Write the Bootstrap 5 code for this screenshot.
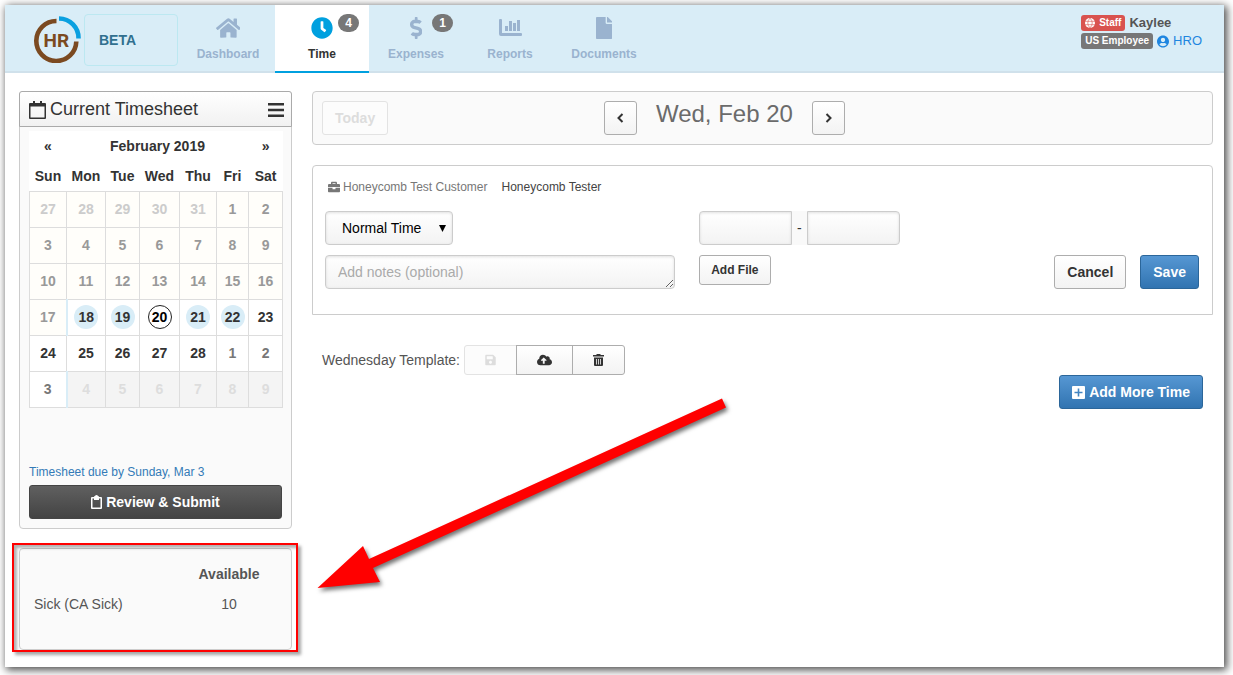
<!DOCTYPE html>
<html lang="en">
<head>
<meta charset="utf-8">
<meta name="viewport" content="width=device-width, initial-scale=1">
<title>HR – Time</title>
<link href="https://cdn.jsdelivr.net/npm/bootstrap@5.3.0/dist/css/bootstrap.min.css" rel="stylesheet">
<style>
  body { background: #fff; color: #555; font-family: "Liberation Sans", Arial, sans-serif; font-size: 14px; line-height: 20px; }
  svg { fill: currentColor; flex: none; }
  .app-frame { margin: 5px 9px 9px 5px; min-height: calc(100vh - 14px); background: #fff; box-shadow: 2px 2px 8px 1px rgba(0,0,0,.7); }

  /* top bar */
  .topbar { background: #d9edf7; border-bottom: 2px solid #d0e1eb; padding-left: 28px; padding-right: 22px; height: 68px; }
  .brand-logo { width: 48px; height: 48px; margin-top: 10px; }
  .beta-box { width: 94px; height: 52px; margin: 9px 3px 0; padding: 15px 14px; border: 1px solid #bce8f1; border-radius: 4px; color: #31708f; font-weight: bold; }
  .tab-link { width: 94px; height: 68px; padding-top: 12px; color: #9ab3cf; font-size: 12px; line-height: 16px; font-weight: bold; text-align: center; text-decoration: none; position: relative; }
  .tab-link svg { display: block; height: 22px; margin: 0 auto 7px; }
  .tab-link.active { background: #fff; color: #333; border-bottom: 2px solid #00a0df; }
  .tab-link.active svg { color: #00a0df; }
  .count-badge { position: absolute; top: 9px; right: 10px; min-width: 21px; padding: 3px 6px; border-radius: 9px; background: #777; color: #fff; font-size: 12px; line-height: 12px; }
  .user-box { padding-top: 9px; font-size: 13px; line-height: 18px; }
  .tag { padding: 3px 4px; border-radius: 3px; font-size: 10px; line-height: 10px; color: #fff; font-weight: bold; }
  .tag-red { background: #d9534f; }
  .tag-grey { background: #777; }
  .user-box a { color: #1f86e0; text-decoration: none; }

  /* columns */
  .columns { padding: 18px 11px 17px 14px; gap: 20px; }
  .side { width: 273px; }
  .panel { background: #fafafa; border: 1px solid #ccc; border-radius: 4px; }
  .side-head { margin: -1px -1px 0; height: 36px; padding: 1px 7px 0 9px; border: 1px solid #aaa; border-radius: 3px 3px 0 0; background: linear-gradient(#fff, #f1f1f1); color: #333; font-size: 18px; }
  .side-head h1 { font-size: 18px; font-weight: normal; }
  .plain-btn { border: 0; background: none; padding: 0; color: inherit; display: block; }
  .side-body { padding: 4px 9px 9px; }

  .cal { width: 100%; table-layout: fixed; background: #fff; border-collapse: collapse; color: #333; font-weight: bold; text-align: center; }
  .cal th { height: 30px; padding: 0; }
  .cal td { height: 36px; padding: 0; border: 1px solid #ddd; }
  .cal .c-sun, .cal .c-thu { width: 37px; }
  .cal .c-mon { width: 39px; }
  .cal .c-tue, .cal .c-sat { width: 34px; }
  .cal .c-wed { width: 40px; }
  .cal .c-fri { width: 32px; }
  .cal .past { background: #fffefa; color: #999; }
  .cal .prev { background: #fffefa; color: #ccc; }
  .cal .next { color: #777; }
  .cal .off { background: #f4f4f4; color: #ddd; }
  .cal .edge { border-right: 2px solid #d9edf7; }
  .dot { display: block; width: 24px; height: 24px; margin: 0 auto; border-radius: 50%; background: #d9edf7; line-height: 24px; }
  .dot-now { background: none; border: 1px solid #222; color: #000; line-height: 23px; }
  .due { margin-top: 54px; margin-bottom: 3px; font-size: 12px; color: #337ab7; text-decoration: none; display: block; }

  /* buttons */
  .hbtn { height: 34px; padding: 0 12px; border: 1px solid #adadad; border-radius: 3px; background: linear-gradient(#fff, #f3f3f3); color: #333; font-size: 14px; line-height: 20px; font-weight: bold; display: inline-flex; align-items: center; justify-content: center; }
  .hbtn:disabled { opacity: 1; border-color: #e3e3e3; color: #ddd; background: #fcfcfc; }
  .hbtn-dark { border-color: #444; background: linear-gradient(#606060, #434343); color: #fff; gap: 4px; }
  .hbtn-blue { border-color: #2b669a; background: linear-gradient(#5697d3, #3174b1); color: #fff; gap: 4px; }
  .hbtn-low { height: 30px; padding: 0 11px; font-size: 12px; }
  .hbtn-arrow { width: 33px; padding: 0; }

  .avail { position: relative; margin-top: 19px; height: 102px; padding: 10px 12px 10px 14px; }
  .avail table { width: 100%; }
  .avail th, .avail td { height: 30px; padding: 0; }
  .avail .num { width: 100px; text-align: center; }
  .callout-box { position: absolute; inset: -6px -7px -3px -8px; border: 2px solid #f00; box-shadow: 3px 3px 3px rgba(0,0,0,.35), inset 3px 3px 3px rgba(0,0,0,.3); pointer-events: none; }

  /* entry area */
  .main-col { position: relative; min-width: 0; }
  .date-bar { padding: 9px 12px 9px 9px; height: 54px; }
  .date-title { font-size: 24px; line-height: 26px; font-weight: normal; color: #6b6b6b; margin: 0 19px; }
  .entry { margin-top: 20px; padding: 12px 13px 25px 12px; border: 1px solid #ccc; border-radius: 4px 4px 0 0; --bs-gutter-x: 24px; }
  .who { font-size: 12px; line-height: 18px; padding-left: 3px; margin-bottom: 15px; color: #777; }
  .who svg { margin-right: 3px; }
  .who b { font-weight: normal; color: #444; margin-left: 14px; }
  .field { height: 34px; border: 1px solid #ccc; border-radius: 4px; background-color: transparent; background-image: linear-gradient(#fff, #f3f3f3); box-shadow: inset 0 1px 3px rgba(0,0,0,.12); font-size: 14px; line-height: 20px; padding: 6px 12px; color: #000; }
  .field::placeholder { color: #aaa; }
  .kind { width: 128px; padding-left: 16px; padding-right: 20px; background-repeat: no-repeat; background-position: right 6px center, 0 0; background-size: 7px 7px, auto; background-image: url("data:image/svg+xml,%3Csvg xmlns='http://www.w3.org/2000/svg' viewBox='0 0 7 7'%3E%3Cpath d='M0 0h7L3.500 7z'/%3E%3C/svg%3E"), linear-gradient(#fff, #f3f3f3); }
  textarea.field { min-height: 34px; display: block; }
  .dash { width: 17px; background: #f9f9f9; color: #333; padding: 0; border: 0; justify-content: center; font-size: 14px; }
  .second { margin-top: 10px; }
  .actions { gap: 14px; }
  .template-row { padding: 30px 10px 0; }
  .template-row .btn-group .hbtn { padding: 0; width: 53px; }
  .template-row .btn-group .hbtn-mid { width: 57px; }
  .arrow { position: absolute; left: 0; top: 300px; filter: drop-shadow(2px 3px 2px rgba(0,0,0,.55)); pointer-events: none; }
</style>
</head>
<body>
<div class="app-frame">
  <header class="topbar d-flex align-items-start">
    <svg class="brand-logo" viewBox="33 15 48 48" role="img" aria-label="HR">
      <path d="M56.500 21A20 20 0 1 0 76.300 41.500" fill="none" stroke="#7b4a21" stroke-width="4.600"/>
      <path d="M59 18.500A19.500 19.500 0 0 1 78.500 38.500" fill="none" stroke="#0aa0e0" stroke-width="4.600"/>
      <text x="43.500" y="47" font-family="Roboto" font-weight="700" font-size="19" fill="#7b4a21">HR</text>
    </svg>
    <div class="beta-box">BETA</div>
    <nav class="d-flex">
      <a class="tab-link" href="#"><svg viewBox="0 0 576 512"><path d="M280.370 148.260L96 300.110V464a16 16 0 0 0 16 16l112.060-.290a16 16 0 0 0 15.920-16V368a16 16 0 0 1 16-16h64a16 16 0 0 1 16 16v95.640a16 16 0 0 0 16 16.050L464 480a16 16 0 0 0 16-16V300L295.670 148.260a12.190 12.190 0 0 0-15.300 0zM571.600 251.470L488 182.560V44.050a12 12 0 0 0-12-12h-56a12 12 0 0 0-12 12v72.610L318.470 43a48 48 0 0 0-61 0L4.340 251.470a12 12 0 0 0-1.600 16.900l25.500 31A12 12 0 0 0 45.150 301l235.220-193.740a12.190 12.190 0 0 1 15.300 0L530.900 301a12 12 0 0 0 16.900-1.600l25.500-31a12 12 0 0 0-1.700-16.930z"/></svg>Dashboard</a>
      <a class="tab-link active" aria-current="page" href="#"><svg viewBox="0 0 512 512"><path fill-rule="evenodd" d="M256 8C119 8 8 119 8 256s111 248 248 248 248-111 248-248S393 8 256 8zm92 313l-20 25a16 16 0 0 1-22 3l-67-50a40 40 0 0 1-15-31V112a16 16 0 0 1 16-16h32a16 16 0 0 1 16 16v144l58 42a16 16 0 0 1 2 23z"/></svg>Time<span class="count-badge">4</span></a>
      <a class="tab-link" href="#"><svg viewBox="0 0 288 512"><path d="M209.200 233.400l-108-31.600C88.700 198.200 80 186.500 80 173.500c0-16.300 13.200-29.500 29.500-29.500h66.300c12.200 0 24.200 3.700 34.200 10.500 6.100 4.100 14.300 3.100 19.500-2l34.800-34c7.100-6.900 6.100-18.400-1.800-24.500C238 74.800 207.400 64.100 176 64V16c0-8.800-7.200-16-16-16h-32c-8.800 0-16 7.200-16 16v48h-2.500C45.800 64-5.400 118.700.5 183.600c4.200 46.100 39.400 83.600 83.800 96.600l102.500 30c12.500 3.700 21.200 15.300 21.200 28.300 0 16.300-13.200 29.500-29.500 29.500h-66.300C100 368 88 364.300 78 357.500c-6.100-4.100-14.300-3.100-19.500 2l-34.800 34c-7.100 6.900-6.100 18.400 1.800 24.500 24.500 19.200 55.100 29.900 86.500 30v48c0 8.800 7.200 16 16 16h32c8.800 0 16-7.200 16-16v-48.200c46.600-.9 90.300-28.600 105.700-72.700 21.500-61.600-14.600-124.800-72.500-141.700z"/></svg>Expenses<span class="count-badge">1</span></a>
      <a class="tab-link" href="#"><svg viewBox="0 0 23 22"><path d="M0 3q0-1 1-1h1q1 0 1 1v13h19q1 0 1 1v1q0 1-1 1H2q-2 0-2-2zM6 9h3v5H6zM10 4h3v10h-3zM14 6h3v8h-3zM18 3h3v11h-3z"/></svg>Reports</a>
      <a class="tab-link" href="#"><svg viewBox="0 0 384 512"><path d="M224 136V0H24C10.700 0 0 10.700 0 24v464c0 13.300 10.700 24 24 24h336c13.300 0 24-10.700 24-24V160H248c-13.200 0-24-10.800-24-24zm160-14v6H256V0h6c6.400 0 12.500 2.500 17 7l98 98c4.500 4.500 7 10.600 7 17z"/></svg>Documents</a>
    </nav>
    <div class="user-box ms-auto">
      <div class="d-flex align-items-center gap-1"><span class="tag tag-red d-flex gap-1"><svg width="10" height="10" viewBox="0 0 10 10"><circle cx="5" cy="5" r="5"/><path d="M0 3.300h10M0 6.700h10M5 0Q0.500 5 5 10M5 0Q9.500 5 5 10" fill="none" stroke="#d9534f" stroke-width=".6"/></svg>Staff</span><strong>Kaylee</strong></div>
      <div class="d-flex align-items-center gap-1"><span class="tag tag-grey">US Employee</span><a href="#" class="d-flex align-items-center gap-1"><svg width="12" height="13" viewBox="0 0 496 512"><path d="M248 8C111 8 0 119 0 256s111 248 248 248 248-111 248-248S385 8 248 8zm0 96c48.600 0 88 39.400 88 88s-39.400 88-88 88-88-39.400-88-88 39.400-88 88-88zm0 344c-58.700 0-111.300-26.600-146.500-68.200 18.800-35.400 55.600-59.800 98.500-59.800 2.400 0 4.800.4 7.100 1.100 13 4.200 26.600 6.900 40.900 6.900 14.300 0 28-2.700 40.900-6.900 2.300-.7 4.700-1.100 7.100-1.100 42.900 0 79.700 24.400 98.500 59.800C359.300 421.400 306.700 448 248 448z"/></svg>HRO</a></div>
    </div>
  </header>

  <div class="columns d-flex align-items-start">
    <aside class="side flex-shrink-0">
      <section class="panel">
        <div class="side-head d-flex align-items-center justify-content-between">
          <div class="d-flex align-items-center gap-1">
            <svg width="17" height="18" viewBox="0 0 17 18"><path fill-rule="evenodd" d="M1 2h3V0h2v2h5V0h2v2h3q1 0 1 1v14q0 1-1 1H1q-1 0-1-1V3q0-1 1-1zM1.500 5.500v11h14v-11z"/></svg>
            <h1 class="m-0">Current Timesheet</h1>
          </div>
          <button class="plain-btn" type="button" aria-label="Menu"><svg class="d-block" width="16" height="14" viewBox="0 0 16 14"><path d="M0 0h16v2.500H0zM0 5.700h16v2.500H0zM0 11.500h16V14H0z"/></svg></button>
        </div>
        <div class="side-body">
          <table class="cal">
            <colgroup><col class="c-sun"><col class="c-mon"><col class="c-tue"><col class="c-wed"><col class="c-thu"><col class="c-fri"><col class="c-sat"></colgroup>
            <thead>
              <tr><th>«</th><th colspan="5">February 2019</th><th>»</th></tr>
              <tr><th>Sun</th><th>Mon</th><th>Tue</th><th>Wed</th><th>Thu</th><th>Fri</th><th>Sat</th></tr>
            </thead>
            <tbody>
              <tr><td class="prev">27</td><td class="prev">28</td><td class="prev">29</td><td class="prev">30</td><td class="prev">31</td><td class="past">1</td><td class="past">2</td></tr>
              <tr><td class="past">3</td><td class="past">4</td><td class="past">5</td><td class="past">6</td><td class="past">7</td><td class="past">8</td><td class="past">9</td></tr>
              <tr><td class="past">10</td><td class="past">11</td><td class="past">12</td><td class="past">13</td><td class="past">14</td><td class="past">15</td><td class="past">16</td></tr>
              <tr><td class="past edge">17</td><td><span class="dot">18</span></td><td><span class="dot">19</span></td><td><span class="dot dot-now">20</span></td><td><span class="dot">21</span></td><td><span class="dot">22</span></td><td>23</td></tr>
              <tr><td>24</td><td>25</td><td>26</td><td>27</td><td>28</td><td class="next">1</td><td class="next">2</td></tr>
              <tr><td class="next edge">3</td><td class="off">4</td><td class="off">5</td><td class="off">6</td><td class="off">7</td><td class="off">8</td><td class="off">9</td></tr>
            </tbody>
          </table>
          <a class="due" href="#">Timesheet due by Sunday, Mar 3</a>
          <button class="hbtn hbtn-dark w-100" type="button"><svg width="11" height="14" viewBox="0 0 11 14"><path fill-rule="evenodd" d="M1 2h2q0-1 1-1 .5-1 1.500-1T7 1q1 0 1 1h2q1 0 1 1v10q0 1-1 1H1q-1 0-1-1V3q0-1 1-1zm.5 1.500v9h8v-9H8V5H3V3.500z"/></svg>Review &amp; Submit</button>
        </div>
      </section>

      <section class="panel avail">
        <table>
          <thead><tr><td></td><th class="num">Available</th></tr></thead>
          <tbody><tr><td>Sick (CA Sick)</td><td class="num">10</td></tr></tbody>
        </table>
        <div class="callout-box"></div>
      </section>
    </aside>

    <main class="main-col flex-grow-1">
      <div class="panel date-bar">
        <div class="row gx-0">
          <div class="col-3"><button class="hbtn" type="button" disabled>Today</button></div>
          <div class="col-5 d-flex justify-content-center">
            <button class="hbtn hbtn-arrow" type="button" aria-label="Previous day"><svg width="7" height="10" viewBox="0 0 7 10"><path d="M5.500 1L1.500 5l4 4" fill="none" stroke="currentColor" stroke-width="2"/></svg></button>
            <h2 class="date-title">Wed, Feb 20</h2>
            <button class="hbtn hbtn-arrow" type="button" aria-label="Next day"><svg width="7" height="10" viewBox="0 0 7 10"><path d="M1.500 1l4 4-4 4" fill="none" stroke="currentColor" stroke-width="2"/></svg></button>
          </div>
        </div>
      </div>

      <form class="entry">
        <div class="who d-flex align-items-center"><svg width="12" height="12" viewBox="0 0 512 512"><path d="M320 336c0 8.840-7.160 16-16 16h-96c-8.840 0-16-7.160-16-16v-48H0v144c0 25.600 22.400 48 48 48h416c25.600 0 48-22.400 48-48V288H320v48zm144-208h-80V80c0-25.600-22.400-48-48-48H176c-25.600 0-48 22.400-48 48v48H48c-25.600 0-48 22.400-48 48v80h512v-80c0-25.600-22.400-48-48-48zm-144 0H192V96h128v32z"/></svg>Honeycomb Test Customer<b>Honeycomb Tester</b></div>
        <div class="row">
          <div class="col-5"><select class="form-select field kind" aria-label="Time type"><option>Normal Time</option></select></div>
          <div class="col-3">
            <div class="input-group flex-nowrap">
              <input type="text" class="form-control field" aria-label="Start time"><span class="input-group-text dash">-</span><input type="text" class="form-control field" aria-label="End time">
            </div>
          </div>
        </div>
        <div class="row second">
          <div class="col-5"><textarea class="form-control field" rows="1" aria-label="Notes" placeholder="Add notes (optional)"></textarea></div>
          <div class="col-3"><button class="hbtn hbtn-low" type="button">Add File</button></div>
          <div class="col-4 d-flex justify-content-end actions"><button class="hbtn" type="button">Cancel</button><button class="hbtn hbtn-blue" type="submit">Save</button></div>
        </div>
      </form>

      <div class="template-row">
        <div class="d-flex align-items-center gap-1">
          <span>Wednesday Template:</span>
          <div class="btn-group" role="group" aria-label="Wednesday Template">
            <button class="btn hbtn hbtn-low" type="button" disabled aria-label="Save template"><svg width="11" height="12" viewBox="0 0 448 512"><path d="M433.900 129.900l-83.800-83.800A48 48 0 0 0 316 32H48C21.500 32 0 53.500 0 80v352c0 26.500 21.500 48 48 48h352c26.500 0 48-21.500 48-48V163.900a48 48 0 0 0-14-34zM224 416c-35.300 0-64-28.700-64-64s28.700-64 64-64 64 28.700 64 64-28.700 64-64 64zm96-304.500V212c0 6.600-5.400 12-12 12H76c-6.600 0-12-5.400-12-12V108c0-6.600 5.400-12 12-12h228.500c3.200 0 6.200 1.300 8.500 3.500l3.500 3.500a12 12 0 0 1 3.500 8.500z"/></svg></button>
            <button class="btn hbtn hbtn-low hbtn-mid" type="button" aria-label="Load template"><svg width="15" height="12" viewBox="0 0 640 512"><path d="M537.600 226.600c4.100-10.700 6.400-22.400 6.400-34.600 0-53-43-96-96-96-19.700 0-38.100 6-53.300 16.200C367 64.200 315.300 32 256 32c-88.400 0-160 71.600-160 160 0 2.700.1 5.400.2 8.100C40.200 219.800 0 273.200 0 336c0 79.500 64.500 144 144 144h368c70.700 0 128-57.300 128-128 0-61.900-44-113.600-102.400-125.400zM393.400 288H328v112c0 8.800-7.200 16-16 16h-48c-8.800 0-16-7.200-16-16V288h-65.400c-14.300 0-21.400-17.200-11.300-27.300l105.400-105.400c6.200-6.200 16.400-6.200 22.600 0l105.400 105.400c10.100 10.100 2.900 27.300-11.300 27.300z"/></svg></button>
            <button class="btn hbtn hbtn-low" type="button" aria-label="Delete template"><svg width="11" height="12" viewBox="0 0 11 12"><path fill-rule="evenodd" d="M0 1h3l1-1h3l1 1h3v1.500H0zM1 3.500h9V11q0 1-1 1H2q-1 0-1-1zM3 5v5.500h.8V5zM5.100 5v5.500h.8V5zM7.200 5v5.500H8V5z"/></svg></button>
          </div>
        </div>
        <div class="d-flex justify-content-end"><button class="hbtn hbtn-blue" type="button"><svg width="13" height="13" viewBox="0 0 13 13"><path fill-rule="evenodd" d="M1 0h11q1 0 1 1v11q0 1-1 1H1q-1 0-1-1V1q0-1 1-1zm4.700 2.500v3.200H2.500v1.600h3.200v3.200h1.600V7.300h3.200V5.700H7.300V2.500z"/></svg>Add More Time</button></div>
      </div>

      <svg class="arrow" width="420" height="200" viewBox="0 0 420 200"><path fill="#f00" d="M5.500 197L51 155l6 13L410 7.500l4 9L61 177l7 14z"/></svg>
    </main>
  </div>
</div>
<script src="https://cdn.jsdelivr.net/npm/bootstrap@5.3.0/dist/js/bootstrap.bundle.min.js"></script>
</body>
</html>
